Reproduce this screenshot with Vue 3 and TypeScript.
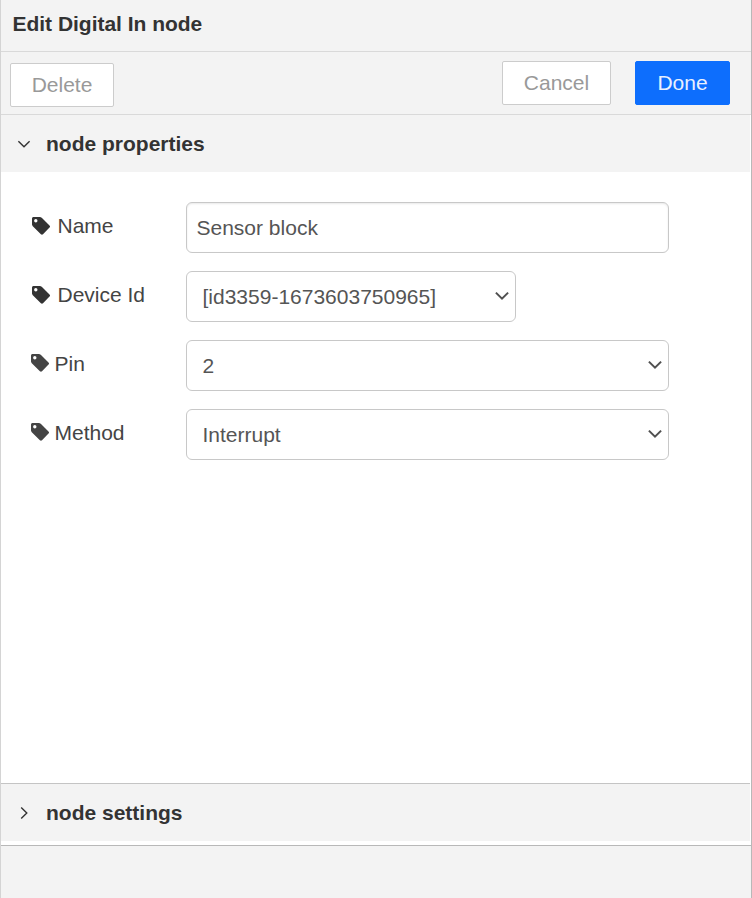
<script setup lang="ts">
import { ref } from 'vue'

interface Field {
  id: string
  label: string
  kind: 'text' | 'select'
  value: string
  dim?: boolean
  narrow?: boolean
}

const fields = ref<Field[]>([
  { id: 'name', label: 'Name', kind: 'text', value: 'Sensor block', dim: true },
  { id: 'device', label: 'Device Id', kind: 'select', value: '[id3359-1673603750965]', dim: true, narrow: true },
  { id: 'pin', label: 'Pin', kind: 'select', value: '2' },
  { id: 'method', label: 'Method', kind: 'select', value: 'Interrupt' },
])
</script>

<template>
  <div class="tray">
    <header class="title">Edit Digital In node</header>
    <div class="toolbar">
      <button class="btn delete" type="button">Delete</button>
      <div class="actions">
        <button class="btn cancel" type="button">Cancel</button>
        <button class="btn primary" type="button">Done</button>
      </div>
    </div>

    <main class="body">
      <h2 class="section">
        <svg class="caret" viewBox="0 0 14 14"><path d="M1.4 4.2 7 9.8l5.6-5.6" /></svg>
        <span>node properties</span>
      </h2>
      <form class="form">
        <div v-for="field in fields" :key="field.id" class="row">
          <label class="label" :class="{ dim: field.dim }" :for="field.id">
            <svg class="tag" viewBox="0 0 18 18">
              <path fill-rule="evenodd" d="M1.5 0h6.2c.8 0 1.7.4 2.3 1l7.5 7.4c.7.7.7 1.5 0 2.1L11 17.2c-.6.6-1.4.6-2.1 0L1.3 9.7C.6 9.1 0 8 0 7.2V1.5C0 .7.7 0 1.5 0Zm2.3 2.1a1.7 1.7 0 1 0 0 3.4 1.7 1.7 0 0 0 0-3.4Z" />
            </svg>
            <span>{{ field.label }}</span>
          </label>
          <input v-if="field.kind === 'text'" :id="field.id" v-model="field.value" class="control" type="text" />
          <div v-else class="picker" :class="{ narrow: field.narrow }">
            <select :id="field.id" v-model="field.value" class="control">
              <option :value="field.value">{{ field.value }}</option>
            </select>
            <svg class="arrow" viewBox="0 0 14 10"><path d="m.9 1.6 6.1 6 6.1-6" /></svg>
          </div>
        </div>
      </form>
      <h2 class="section settings">
        <svg class="caret" viewBox="0 0 14 14"><path d="M4.2 1.4 9.8 7l-5.6 5.6" /></svg>
        <span>node settings</span>
      </h2>
    </main>
    <footer class="footer"></footer>
  </div>
</template>

<style>
body {
  background: #fff;
}
</style>

<style scoped>
.tray {
  box-sizing: border-box;
  display: flex;
  flex-direction: column;
  height: 898px;
  border-left: 1px solid #d4d4d4;
  border-right: 1px solid #b8b8b8;
  background: #f3f3f3;
  color: #333;
  font: 21px/24px "Liberation Sans", Arial, sans-serif;
}
.title {
  box-sizing: border-box;
  height: 52px;
  padding: 12px 0 0 11.5px;
  border-bottom: 1px solid #d9d9d9;
  font-weight: bold;
  letter-spacing: -0.02px;
}
.toolbar {
  box-sizing: border-box;
  display: flex;
  justify-content: space-between;
  align-items: flex-start;
  height: 63px;
  padding: 9px 21px 0 9px;
  border-bottom: 1px solid #d9d9d9;
}
.actions {
  display: flex;
  gap: 24px;
}
.btn {
  box-sizing: border-box;
  height: 44px;
  padding: 0;
  border: 1px solid #ccc;
  border-radius: 2px;
  background: #fff;
  color: #999;
  font: inherit;
}
.delete {
  width: 104px;
  margin-top: 2px;
}
.cancel {
  width: 109px;
}
.primary {
  width: 95px;
  border-color: #0d6efd;
  background: #0d6efd;
  color: #e8f0ff;
}
.body {
  display: flex;
  flex-direction: column;
  box-sizing: border-box;
  height: 730px;
  padding: 0 1px 4px 0;
  background: #fff;
}
.section {
  display: flex;
  align-items: center;
  gap: 15px;
  height: 57px;
  margin: 0;
  padding-left: 16px;
  background: #f3f3f3;
  font-size: 21px;
  line-height: 24px;
}
.settings {
  border-top: 1px solid #c4c4c4;
}
.caret {
  width: 14px;
  height: 14px;
  fill: none;
  stroke: #333;
  stroke-width: 1.4;
}
.form {
  display: flex;
  flex: 1;
  flex-direction: column;
  gap: 18px;
  padding: 30px 0 0 29px;
}
.row {
  display: flex;
  height: 51px;
}
.label {
  box-sizing: border-box;
  display: flex;
  gap: 5.5px;
  width: 156px;
  padding: 12px 0 0 1px;
  color: #444;
}
.label.dim {
  gap: 7.5px;
  padding-left: 2px;
}
.tag {
  width: 18px;
  height: 18px;
  margin-top: 2px;
  fill: #444;
}
.dim .tag {
  margin-top: 3px;
  fill: #333;
}
.control {
  box-sizing: border-box;
  width: 483px;
  height: 51px;
  margin: 0;
  padding: 0 10px;
  border: 1px solid #c8c8c8;
  border-radius: 6px;
  outline: none;
  background: #fff;
  color: #555;
  font: inherit;
}
input.control {
  padding-left: 9.5px;
  box-shadow: inset 0 1px 2px rgba(0, 0, 0, 0.09);
}
.picker {
  display: grid;
  align-items: center;
  width: 483px;
}
.picker.narrow {
  width: 330px;
}
.picker > * {
  grid-area: 1 / 1;
}
select.control {
  width: 100%;
  padding: 0 15.5px;
  appearance: none;
}
.arrow {
  justify-self: end;
  width: 14px;
  height: 10px;
  margin: 0 7px 1px 0;
  fill: none;
  stroke: #505050;
  stroke-width: 2;
  pointer-events: none;
}
.footer {
  flex: 1;
  border-top: 1px solid #b8b8b8;
}
</style>
